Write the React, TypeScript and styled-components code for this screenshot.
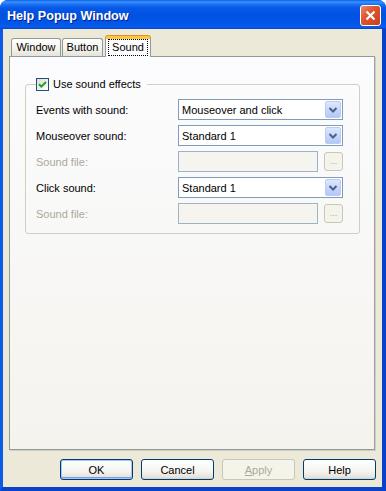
import React from 'react';
import styled, { createGlobalStyle } from 'styled-components';

const GlobalStyle = createGlobalStyle`
	html, body {
		margin: 0;
		padding: 0;
		background: #ffffff;
	}
	body {
		font-family: 'Liberation Sans', Arial, sans-serif;
		font-size: 11px;
		color: #000000;
	}
`;

const Frame = styled.div`
	width: 386px;
	height: 491px;
	display: flex;
	flex-direction: column;
	border-radius: 8px 8px 0 0;
	overflow: hidden;
	background: #0054e3;
`;

const TitleBar = styled.div`
	height: 29px;
	flex: none;
	box-sizing: border-box;
	padding: 2px 5px 0 7px;
	display: flex;
	align-items: center;
	justify-content: space-between;
	background: linear-gradient(
		to bottom,
		#0a5fe9 0px,
		#3d93fd 2px,
		#1d74f5 4px,
		#0758e7 8px,
		#0052e2 15px,
		#0257e8 24px,
		#0a5df0 27px,
		#0645cc 29px
	);
`;

const Title = styled.span`
	font-family: 'Liberation Sans', Arial, sans-serif;
	font-weight: bold;
	font-size: 12.6px;
	color: #ffffff;
	text-shadow: 1px 1px 0 #0a1f8a;
`;

const CloseButton = styled.div`
	width: 21px;
	height: 21px;
	box-sizing: border-box;
	border: 1px solid #ffffff;
	border-radius: 3px;
	background: linear-gradient(135deg, #eb8a68 0%, #de5530 40%, #c9401c 100%);
	display: flex;
	align-items: center;
	justify-content: center;
`;

const Client = styled.div`
	flex: 1;
	display: flex;
	flex-direction: column;
	background: #ece9d8;
	border-style: solid;
	border-width: 0 4px 4px 3px;
	border-color: #0055e5 #0842c8 #0843c9 #0a5be8;
	padding: 7px 0 7px 6px;
`;

const TabStrip = styled.div`
	height: 20px;
	display: flex;
	align-items: flex-end;
	padding-left: 2px;
	position: relative;
	z-index: 1;
`;

const Tab = styled.div<{ $width: number; $active?: boolean }>`
	width: ${(p) => p.$width}px;
	box-sizing: border-box;
	margin-left: ${(p) => (p.$active ? 1 : 0)}px;
	margin-right: 1px;
	height: ${(p) => (p.$active ? 21 : 18)}px;
	margin-bottom: ${(p) => (p.$active ? -1 : 0)}px;
	border: 1px solid #919b9c;
	border-bottom: none;
	border-top: ${(p) => (p.$active ? '3px solid #ffc73c' : '1px solid #919b9c')};
	border-radius: 3px 3px 0 0;
	box-shadow: ${(p) => (p.$active ? 'inset 0 0 0 0 transparent, 0 -1px 0 #e68b2c' : 'none')};
	background: ${(p) => (p.$active ? '#fcfcfe' : 'linear-gradient(to bottom, #ffffff, #f3f2ec 60%, #e6e3d7)')};
	display: flex;
	align-items: center;
	justify-content: center;
	padding-bottom: ${(p) => (p.$active ? 1 : 0)}px;
`;

const TabLabel = styled.span<{ $focused?: boolean }>`
	padding: 1px 3px;
	outline: ${(p) => (p.$focused ? '1px dotted #000000' : 'none')};
	line-height: 13px;
`;

const Panel = styled.div`
	width: 366px;
	height: 394px;
	box-sizing: border-box;
	border: 1px solid #919b9c;
	border-right-color: #9ba4a5;
	box-shadow: 1px 1px 0 #d0cebf;
	background: linear-gradient(to bottom, #fcfcfe, #f4f3ee);
	padding: 20px 0 0 15px;
`;

const Group = styled.fieldset`
	margin: 0;
	width: 335px;
	box-sizing: border-box;
	border: 1px solid #d0d0bf;
	border-radius: 3px;
	padding: 8px 0 9px 10px;
`;

const Legend = styled.legend`
	padding: 0 6px 0 0;
	margin-left: 0;
	display: flex;
	align-items: center;
	gap: 4px;
	height: 14px;
`;

const CheckBox = styled.span`
	width: 13px;
	height: 13px;
	box-sizing: border-box;
	border: 1px solid #1c5180;
	background: linear-gradient(135deg, #dcdcd7, #ffffff);
	display: flex;
	align-items: center;
	justify-content: center;
`;

const Rows = styled.div`
	display: grid;
	grid-template-columns: 142px 165px;
	row-gap: 5px;
	align-items: center;
`;

const Label = styled.span<{ $disabled?: boolean }>`
	color: ${(p) => (p.$disabled ? '#aca899' : '#000000')};
`;

const Combo = styled.div`
	height: 21px;
	box-sizing: border-box;
	border: 1px solid #7f9db9;
	background: #ffffff;
	display: flex;
	align-items: center;
	padding: 0 1px 0 3px;
`;

const ComboText = styled.span`
	flex: 1;
`;

const DropButton = styled.div`
	width: 16px;
	height: 17px;
	box-sizing: border-box;
	border: 1px solid #bccbef;
	border-radius: 2px;
	background: linear-gradient(to bottom, #dde7fd, #c3d4fb 60%, #b4c8f6);
	display: flex;
	align-items: center;
	justify-content: center;
`;

const FileRow = styled.div`
	display: flex;
	align-items: center;
	gap: 6px;
`;

const TextBox = styled.div`
	width: 140px;
	height: 21px;
	box-sizing: border-box;
	border: 1px solid #9fb3c8;
	background: #f5f4ef;
`;

const SmallButton = styled.div`
	width: 19px;
	height: 19px;
	box-sizing: border-box;
	border: 1px solid #c9c7ba;
	border-radius: 3px;
	background: #f5f4ea;
	color: #aca899;
	display: flex;
	align-items: center;
	justify-content: center;
	font-size: 9px;
	padding-bottom: 2px;
`;

const ButtonBar = styled.div`
	display: flex;
	justify-content: flex-end;
	gap: 8px;
	margin-top: 9px;
	padding-right: 6px;
`;

const PushButton = styled.div<{ $default?: boolean; $disabled?: boolean }>`
	width: 73px;
	height: 21px;
	box-sizing: border-box;
	border: 1px solid ${(p) => (p.$disabled ? '#c9c7ba' : '#003c74')};
	border-radius: 3px;
	background: ${(p) =>
		p.$disabled ? '#f5f4ea' : 'linear-gradient(to bottom, #ffffff, #f4f4f0 60%, #e6e3da 90%, #d6d0c5)'};
	box-shadow: ${(p) => (p.$default ? 'inset 0 0 0 1px #aac4f5, inset 0 -1px 0 1px #7b9ce8' : 'none')};
	color: ${(p) => (p.$disabled ? '#aca899' : '#000000')};
	display: flex;
	align-items: center;
	justify-content: center;
`;

const Mnemonic = styled.span`
	text-decoration: underline;
`;

const Chevron = () => (
	<svg width='10' height='8' viewBox='0 0 10 8'>
		<path d='M1.5 2 L5 5.5 L8.5 2' fill='none' stroke='#4d6185' strokeWidth='2' />
	</svg>
);

const SelectBox = ({ value }: { value: string }) => (
	<Combo>
		<ComboText>{value}</ComboText>
		<DropButton>
			<Chevron />
		</DropButton>
	</Combo>
);

const FileInput = () => (
	<FileRow>
		<TextBox />
		<SmallButton>...</SmallButton>
	</FileRow>
);

export default function App() {
	return (
		<>
			<GlobalStyle />
			<Frame>
				<TitleBar>
					<Title>Help Popup Window</Title>
					<CloseButton>
						<svg width='11' height='11' viewBox='0 0 11 11'>
							<path d='M1.5 1.5 L9.5 9.5 M9.5 1.5 L1.5 9.5' stroke='#ffffff' strokeWidth='2.2' />
						</svg>
					</CloseButton>
				</TitleBar>
				<Client>
					<TabStrip>
						<Tab $width={50}>
							<TabLabel>Window</TabLabel>
						</Tab>
						<Tab $width={41}>
							<TabLabel>Button</TabLabel>
						</Tab>
						<Tab $width={46} $active>
							<TabLabel $focused>Sound</TabLabel>
						</Tab>
					</TabStrip>
					<Panel>
						<Group>
							<Legend>
								<CheckBox>
									<svg width='9' height='9' viewBox='0 0 9 9'>
										<path d='M1 4.2 L3.4 6.6 L8 2' fill='none' stroke='#21a121' strokeWidth='2' />
									</svg>
								</CheckBox>
								<span>Use sound effects</span>
							</Legend>
							<Rows>
								<Label>Events with sound:</Label>
								<SelectBox value='Mouseover and click' />
								<Label>Mouseover sound:</Label>
								<SelectBox value='Standard 1' />
								<Label $disabled>Sound file:</Label>
								<FileInput />
								<Label>Click sound:</Label>
								<SelectBox value='Standard 1' />
								<Label $disabled>Sound file:</Label>
								<FileInput />
							</Rows>
						</Group>
					</Panel>
					<ButtonBar>
						<PushButton $default>OK</PushButton>
						<PushButton>Cancel</PushButton>
						<PushButton $disabled>
							<span>
								<Mnemonic>A</Mnemonic>pply
							</span>
						</PushButton>
						<PushButton>Help</PushButton>
					</ButtonBar>
				</Client>
			</Frame>
		</>
	);
}
